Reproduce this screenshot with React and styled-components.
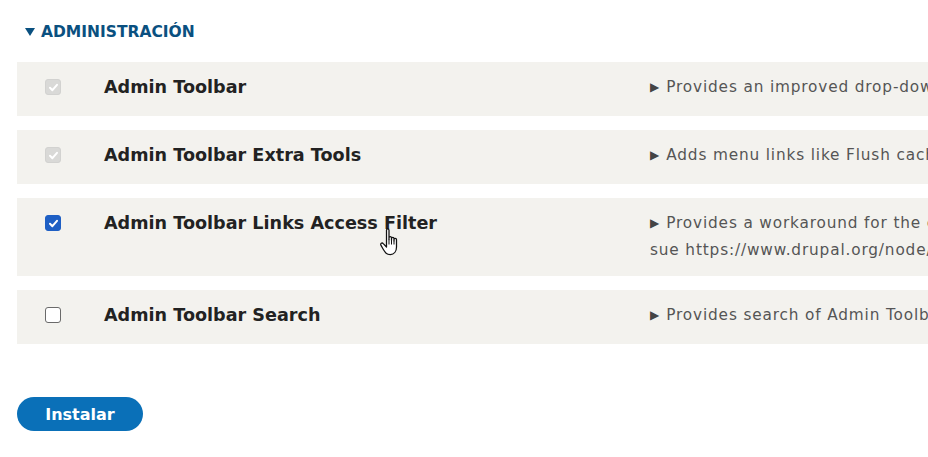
import styled, { createGlobalStyle } from "styled-components";

const GlobalStyle = createGlobalStyle`
  body {
    margin: 0;
    background: #ffffff;
    font-family: "DejaVu Sans", Verdana, sans-serif;
    overflow: hidden;
  }
`;

const Page = styled.div`
  padding: 21px 0 0 17px;
  width: 1200px;
  position: relative;
`;

const Heading = styled.h3`
  margin: 0 0 19px 8px;
  font-size: 15.5px;
  font-weight: bold;
  color: #0a5080;
  text-transform: uppercase;
  display: flex;
  align-items: center;
  gap: 6px;
  height: 22px;
`;

const List = styled.div`
  display: flex;
  flex-direction: column;
  gap: 14px;
`;

const Row = styled.div`
  display: grid;
  grid-template-columns: 87px 546px 1fr;
  align-items: start;
  background: #f3f2ee;
  padding: 12px 0;
  min-height: ${(p) => (p.tall ? "54px" : "30px")};
`;

const Check = styled.span`
  margin: 5px 0 0 28px;
  width: 16px;
  height: 16px;
  box-sizing: border-box;
  border-radius: 3px;
  display: flex;
  align-items: center;
  justify-content: center;
  background: ${(p) =>
    p.state === "on" ? "#1e5fc4" : p.state === "locked" ? "#d9d9d7" : "#fff"};
  border: 1px solid
    ${(p) =>
      p.state === "on" ? "#1e5fc4" : p.state === "locked" ? "#d2d2d0" : "#6a6a6a"};
`;

const Title = styled.div`
  font-size: 17.6px;
  font-weight: bold;
  color: #222;
  line-height: 26px;
`;

const Desc = styled.div`
  font-size: 15.3px;
  letter-spacing: 0.85px;
  color: #555;
  line-height: 26px;
  white-space: nowrap;
`;

const Arrow = styled.span`
  font-size: 12px;
  letter-spacing: 0;
  color: #444;
  margin-right: 7px;
  position: relative;
  top: -1px;
`;

const Actions = styled.div`
  margin-top: 53px;
`;

const Button = styled.button`
  background: #0a70b8;
  color: #fff;
  border: none;
  border-radius: 20px;
  height: 34px;
  width: 126px;
  font-family: "DejaVu Sans", Verdana, sans-serif;
  font-size: 16px;
  font-weight: bold;
`;

const Cursor = styled.svg`
  position: absolute;
  left: 379px;
  top: 227px;
`;

const modules = [
  { name: "Admin Toolbar", state: "locked", desc: ["Provides an improved drop-down menu interface to the site Toolbar."] },
  { name: "Admin Toolbar Extra Tools", state: "locked", desc: ["Adds menu links like Flush cache, Run cron, Run updates, and Logout under Drupal icon."] },
  {
    name: "Admin Toolbar Links Access Filter",
    state: "on",
    tall: true,
    desc: [
      "Provides a workaround for the common problem that users with 'Use the administration pages and help' permission see menu links they don't have access permission for. Once the is",
      "sue https://www.drupal.org/node/296693 be solved, this module will be deprecated.",
    ],
  },
  { name: "Admin Toolbar Search", state: "off", desc: ["Provides search of Admin Toolbar items."] },
];

function Tick() {
  return (
    <svg width="11" height="11" viewBox="0 0 11 11">
      <path d="M2 5.8 L4.4 8.2 L9 2.8" fill="none" stroke="#fff" strokeWidth="2" strokeLinecap="round" strokeLinejoin="round" />
    </svg>
  );
}

export default function App() {
  return (
    <>
      <GlobalStyle />
      <Page>
        <Heading>
          <svg width="10" height="8" viewBox="0 0 10 8">
            <path d="M0 0 H10 L5 8 Z" fill="#0a5080" />
          </svg>
          Administración
        </Heading>
        <List>
          {modules.map((m) => (
            <Row key={m.name} tall={m.tall}>
              <Check state={m.state}>{m.state !== "off" && <Tick />}</Check>
              <Title>{m.name}</Title>
              <Desc>
                {m.desc.map((line, i) => (
                  <div key={i}>
                    {i === 0 && <Arrow>▶</Arrow>}
                    {line}
                  </div>
                ))}
              </Desc>
            </Row>
          ))}
        </List>
        <Actions>
          <Button>Instalar</Button>
        </Actions>
        <Cursor width="25" height="30" viewBox="0 0 20 24">
          <path
            d="M6 2.5 C6 1.2 8 1.2 8 2.5 V10 V8.5 C8 7.3 10 7.3 10 8.5 V10.5 V9.2 C10 8 12 8 12 9.2 V11 V10 C12 8.8 14 8.8 14 10 V16 C14 19.5 12 22 9 22 C6 22 5 20.5 3.5 18 L1.5 14.5 C0.8 13.3 2.4 12.2 3.4 13.3 L6 16 Z"
            fill="#fff"
            stroke="#111"
            strokeWidth="1"
            strokeLinejoin="round"
          />
          <path d="M8 10 V14 M10 10.5 V14 M12 11 V14" stroke="#111" strokeWidth="0.8" />
        </Cursor>
      </Page>
    </>
  );
}
